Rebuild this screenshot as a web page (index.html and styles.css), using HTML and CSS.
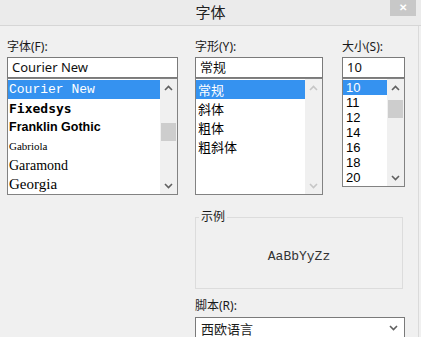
FILE: index.html
```html
<!DOCTYPE html>
<html lang="zh-CN">
<head>
    <meta charset="UTF-8">
    <meta name="viewport" content="width=device-width, initial-scale=1.0">
    <title>字体</title>
    <link rel="stylesheet" href="styles.css">
</head>
<body>

    <!-- Title bar -->
    <div class="titlebar">
        <span class="title">字体</span>
        <button class="close">&#x2715;</button>
    </div>

    <!-- Dialog body -->
    <div class="content">

        <!-- Font family -->
        <div class="field col-font">
            <label>字体(F):</label>
            <div class="entry">Courier New</div>
            <div class="listbox list-font">
                <ul class="items">
                    <li class="selected f-courier">Courier New</li>
                    <li class="f-fixedsys">Fixedsys</li>
                    <li class="f-franklin">Franklin Gothic</li>
                    <li class="f-gabriola">Gabriola</li>
                    <li class="f-garamond">Garamond</li>
                    <li class="f-georgia">Georgia</li>
                </ul>
                <div class="scrollbar">
                    <div class="arrow"><svg width="9" height="6" viewBox="0 0 9 6"><path d="M1 5 L4.5 1.5 L8 5" /></svg></div>
                    <div class="track"><div class="thumb thumb-font"></div></div>
                    <div class="arrow"><svg width="9" height="6" viewBox="0 0 9 6"><path d="M1 1 L4.5 4.5 L8 1" /></svg></div>
                </div>
            </div>
        </div>

        <!-- Font style -->
        <div class="field col-style">
            <label>字形(Y):</label>
            <div class="entry">常规</div>
            <div class="listbox list-style">
                <ul class="items">
                    <li class="selected">常规</li>
                    <li>斜体</li>
                    <li>粗体</li>
                    <li>粗斜体</li>
                </ul>
                <div class="scrollbar disabled">
                    <div class="arrow"><svg width="9" height="6" viewBox="0 0 9 6"><path d="M1 5 L4.5 1.5 L8 5" /></svg></div>
                    <div class="track"></div>
                    <div class="arrow"><svg width="9" height="6" viewBox="0 0 9 6"><path d="M1 1 L4.5 4.5 L8 1" /></svg></div>
                </div>
            </div>
        </div>

        <!-- Font size -->
        <div class="field col-size">
            <label>大小(S):</label>
            <div class="entry">10</div>
            <div class="listbox list-size">
                <ul class="items">
                    <li class="selected">10</li>
                    <li>11</li>
                    <li>12</li>
                    <li>14</li>
                    <li>16</li>
                    <li>18</li>
                    <li>20</li>
                </ul>
                <div class="scrollbar">
                    <div class="arrow"><svg width="9" height="6" viewBox="0 0 9 6"><path d="M1 5 L4.5 1.5 L8 5" /></svg></div>
                    <div class="track"><div class="thumb thumb-size"></div></div>
                    <div class="arrow"><svg width="9" height="6" viewBox="0 0 9 6"><path d="M1 1 L4.5 4.5 L8 1" /></svg></div>
                </div>
            </div>
        </div>

        <!-- Sample + script -->
        <div class="lower">
            <fieldset class="sample">
                <legend>示例</legend>
                <p>AaBbYyZz</p>
            </fieldset>

            <label class="script-label">脚本(R):</label>
            <div class="select">
                <span>西欧语言</span>
                <svg width="9" height="6" viewBox="0 0 9 6"><path d="M1 1 L4.5 4.5 L8 1" /></svg>
            </div>
        </div>

    </div>

</body>
</html>
```

FILE: styles.css
```css
* {
    margin: 0;
    padding: 0;
    box-sizing: border-box;
}
body {
    font-family: "Noto Sans", "Noto Sans CJK SC", sans-serif;
    background: #f0f0f0;
    color: #1a1a1a;
    width: 421px;
    height: 337px;
    overflow: hidden;
}

/* Title bar */
.titlebar {
    height: 26px;
    background: #ebebeb;
    border-bottom: 1px solid #d6d6d6;
    display: grid;
    grid-template-columns: 1fr auto 1fr;
    align-items: start;
}
.title {
    grid-column: 2;
    font-family: "Noto Sans CJK SC", sans-serif;
    font-size: 15px;
    line-height: 24px;
    color: #222;
}
.close {
    grid-column: 3;
    justify-self: end;
    margin-right: 5px;
    width: 26px;
    height: 16px;
    border: none;
    background: #c8c8c8;
    color: #fff;
    font-size: 10px;
    font-weight: bold;
    line-height: 16px;
}

/* Dialog body */
.content {
    width: 419px;
    min-height: 311px;
    border-right: 1px solid #dadada;
    display: grid;
    grid-template-columns: 171px 17px 128px 19px 63px;
    align-items: start;
    padding: 13px 7px 0;
}
.col-font { grid-column: 1; }
.col-style { grid-column: 3; }
.col-size { grid-column: 5; }

label {
    display: block;
    font-size: 12px;
    line-height: 16px;
    margin-bottom: 2px;
    color: #1a1a1a;
}
.entry {
    height: 21px;
    border: 1px solid #7a7a7a;
    background: #fff;
    font-size: 13px;
    line-height: 19px;
    padding-left: 4px;
    color: #111;
}

/* List boxes */
.listbox {
    display: flex;
    border: 1px solid #828282;
    background: #fff;
    height: 117px;
}
.list-size { height: 109px; }
.items {
    flex: 1;
    list-style: none;
    padding-top: 1px;
    overflow: hidden;
}
.items li {
    height: 19px;
    line-height: 19px;
    white-space: nowrap;
    color: #000;
}
.list-font .items li { padding-left: 1px; }
.list-style .items li { padding-left: 2px; font-size: 13px; font-family: "Noto Sans CJK SC", sans-serif; }
.list-size .items li {
    height: 15px;
    line-height: 15px;
    padding-left: 3px;
    font-family: "Liberation Sans", sans-serif;
    font-size: 13px;
}
.items li.selected {
    background: #3592f0;
    color: #fff;
}

.f-courier { font-family: "Liberation Mono", monospace; font-size: 13px; }
.f-fixedsys { font-family: "DejaVu Sans Mono", monospace; font-size: 13px; font-weight: bold; }
.f-franklin { font-family: "Liberation Sans", sans-serif; font-size: 12.5px; font-weight: bold; }
.f-gabriola { font-family: "Liberation Serif", serif; font-size: 11px; }
.f-garamond { font-family: "Liberation Serif", serif; font-size: 14px; }
.f-georgia { font-family: "Liberation Serif", serif; font-size: 15px; }

/* Scrollbars */
.scrollbar {
    width: 17px;
    background: #f0f0f0;
    display: flex;
    flex-direction: column;
}
.arrow {
    height: 17px;
    display: flex;
    align-items: center;
    justify-content: center;
}
.arrow svg path, .select svg path {
    fill: none;
    stroke: #606060;
    stroke-width: 1.6;
}
.scrollbar.disabled .arrow svg path { stroke: #c6c6c6; }
.track { flex: 1; }
.thumb {
    background: #cdcdcd;
    height: 18px;
    margin: 0 1px;
}
.thumb-font { margin-top: 27px; }
.thumb-size { margin-top: 4px; }

/* Lower part */
.lower {
    grid-column: 3 / 6;
    margin-top: 14px;
}
.sample {
    border: 1px solid #dcdcdc;
    height: 80px;
    margin-right: 2px;
    padding: 0;
}
.sample legend {
    font-size: 12px;
    line-height: 16px;
    margin-left: 3px;
    padding: 0 2px;
    color: #1a1a1a;
}
.sample p {
    margin-top: 24px;
    text-align: center;
    font-family: "Liberation Mono", monospace;
    font-size: 13px;
    line-height: 16px;
    color: #333;
}
.script-label {
    margin-top: 9px;
    margin-bottom: 3px;
}
.select {
    height: 22px;
    border: 1px solid #7a7a7a;
    background: #fff;
    display: flex;
    align-items: center;
    justify-content: space-between;
    padding: 0 6px 0 5px;
    font-size: 13px;
    font-family: "Noto Sans CJK SC", sans-serif;
}
```
